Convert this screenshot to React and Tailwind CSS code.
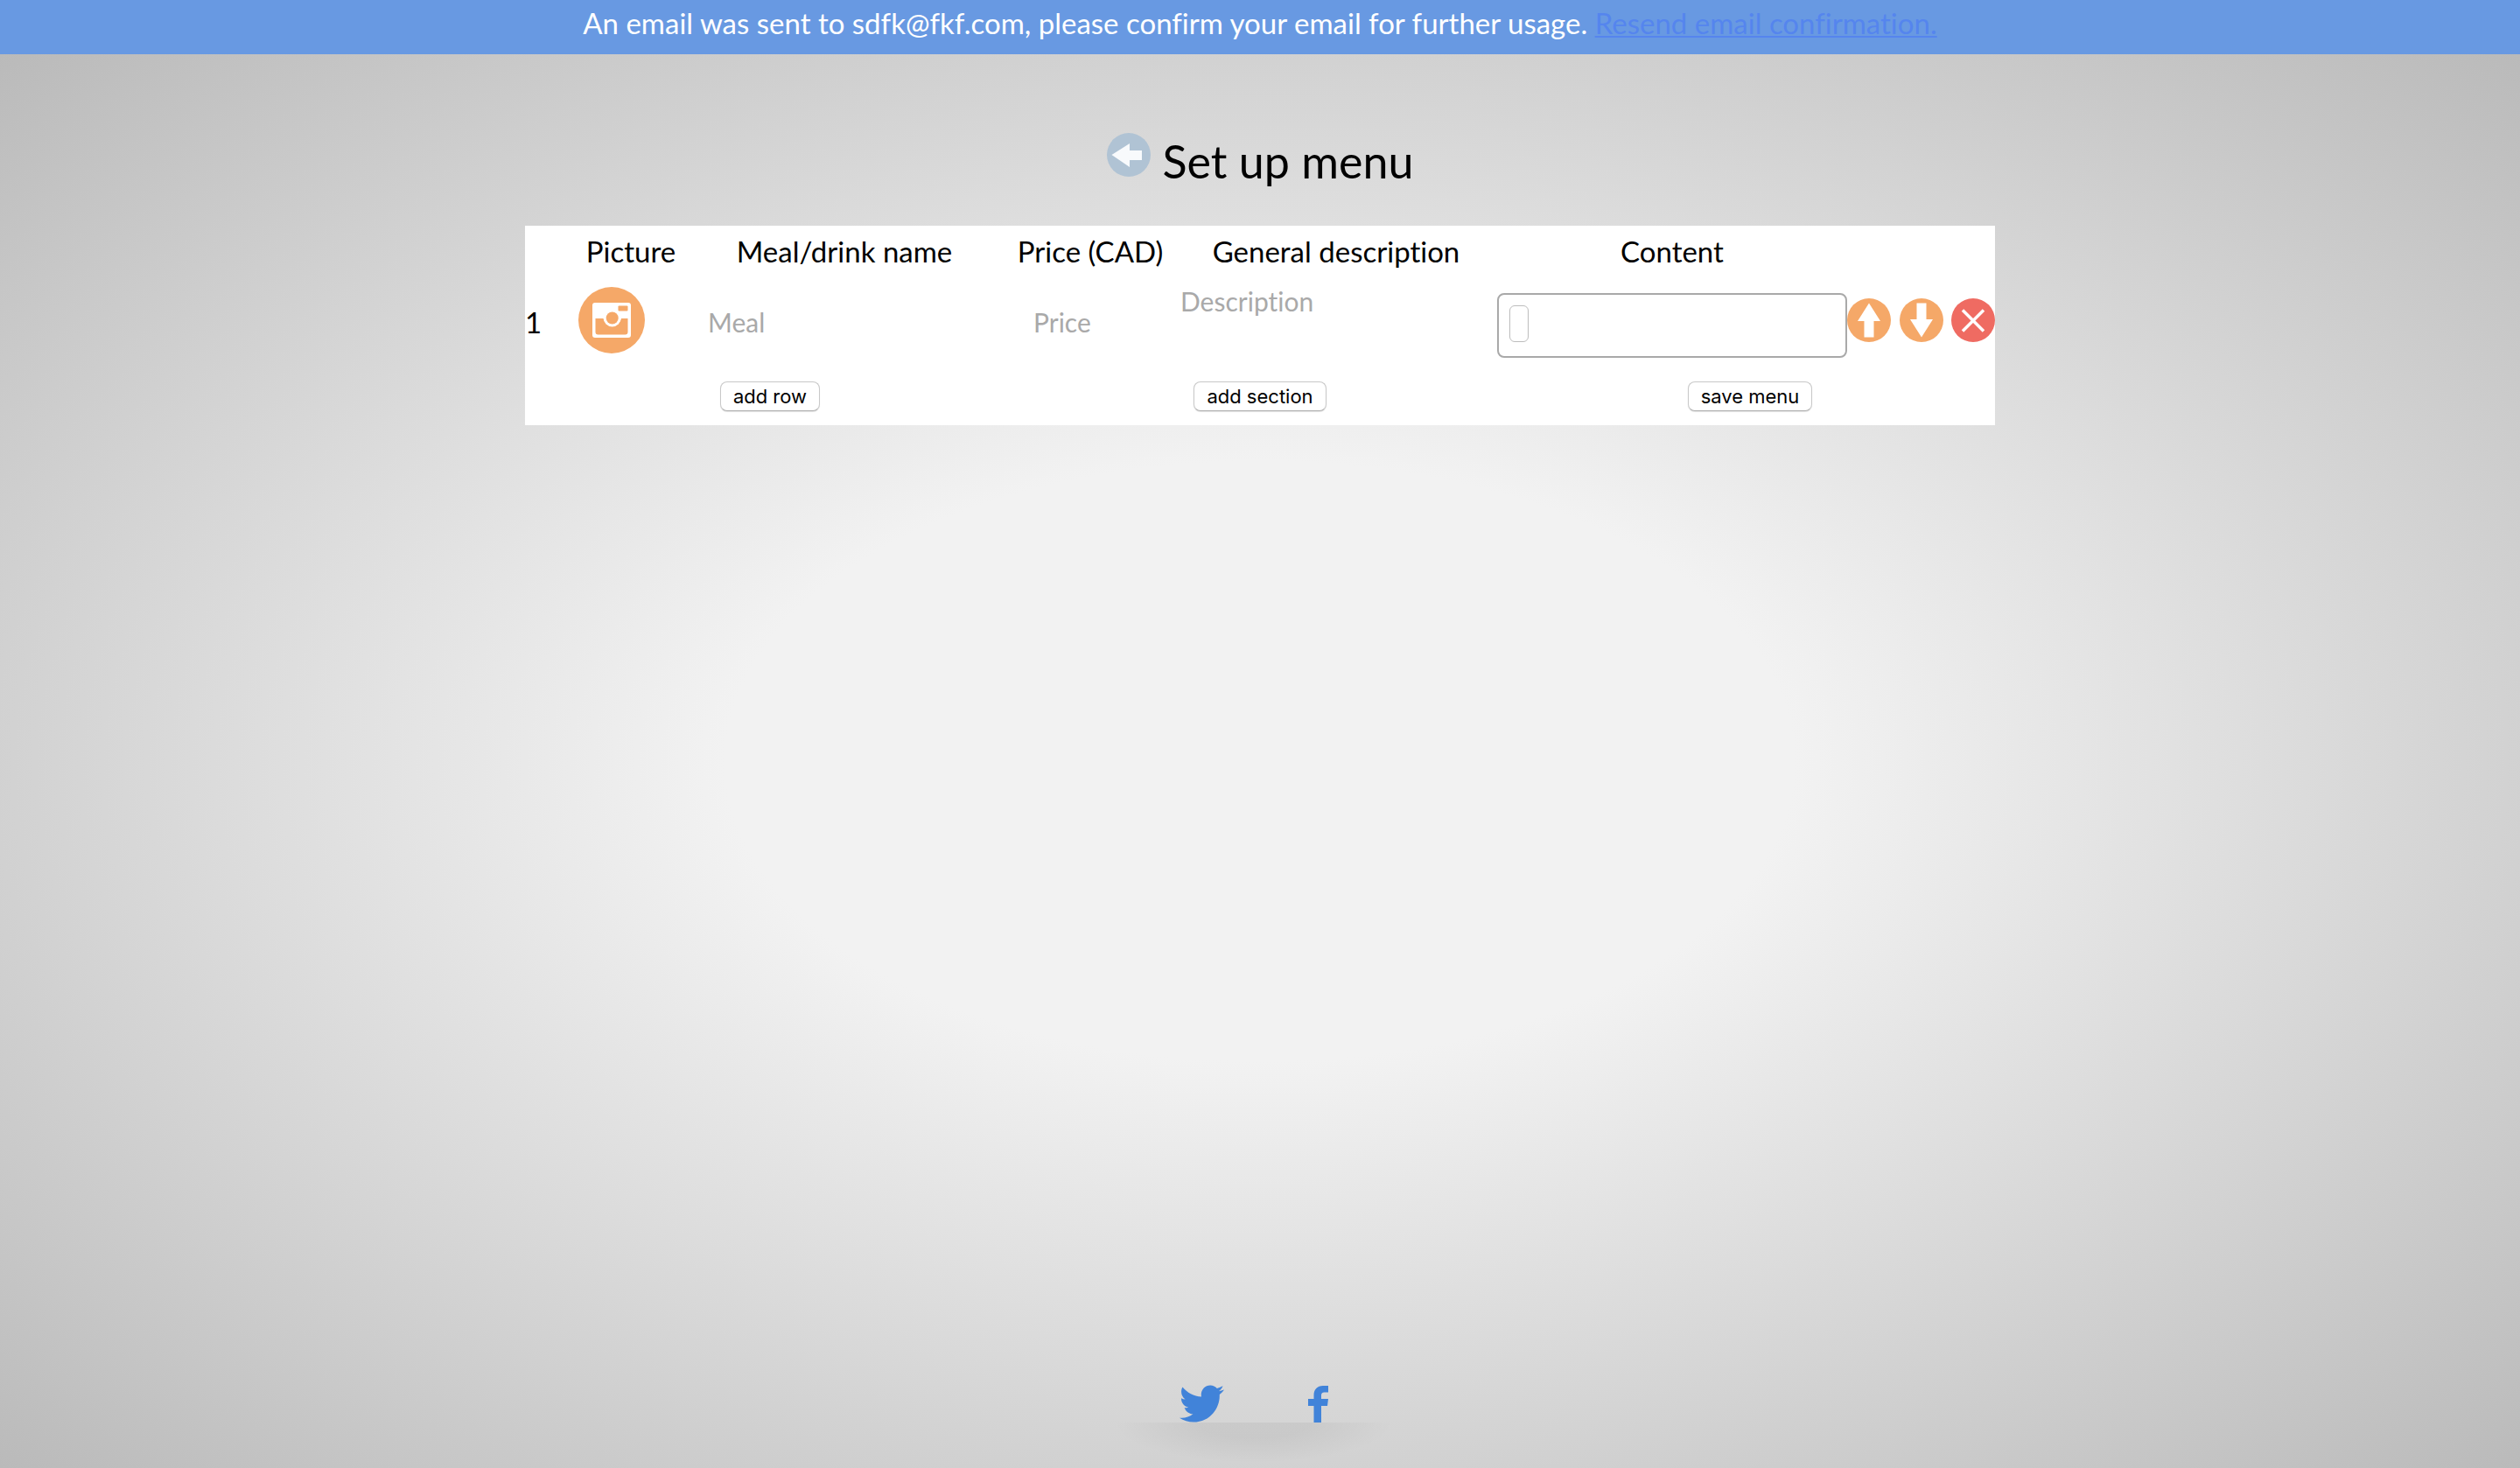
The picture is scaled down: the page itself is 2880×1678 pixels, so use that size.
const label = "text-[33px] leading-10 font-normal text-black";
const field =
  "w-full bg-transparent text-[30px] leading-10 text-black placeholder:text-[#a9a9a9] outline-none";
const pushButton =
  "h-[34px] rounded-lg border border-[#c8c8c8] border-b-[#b0b0b0] bg-white px-3.5 font-['Inter',sans-serif] text-[22px] leading-8 text-black shadow-[0_1px_1px_rgba(0,0,0,0.12)]";

function BackIcon() {
  return (
    <svg viewBox="0 0 50 50" className="size-[50px]" aria-hidden="true">
      <circle cx="25" cy="25" r="25" fill="#b0c3d4" />
      <path d="M5.5 25 26 12v8h14v11H26v8Z" fill="#f8fafc" />
    </svg>
  );
}

function CameraIcon() {
  return (
    <svg viewBox="0 0 76 76" className="size-[76px]" aria-hidden="true">
      <circle cx="38" cy="38" r="38" fill="#f5a868" />
      <rect x="16" y="18" width="44" height="40" rx="3" fill="#fff" />
      <rect x="45.5" y="21.5" width="11" height="6" rx="1" fill="#f5a868" />
      <path d="M19.5 36h9a10.5 10.5 0 0 0 20.500 0h7.500v15.500a3 3 0 0 1-3 3h-31a3 3 0 0 1-3-3Z" fill="#f5a868" />
      <circle cx="38.700" cy="35.500" r="10" fill="#fff" />
      <circle cx="38.700" cy="35.500" r="7" fill="#f5a868" />
    </svg>
  );
}

function UpIcon() {
  return (
    <svg viewBox="0 0 50 50" className="size-[50px]" aria-hidden="true">
      <circle cx="25" cy="25" r="25" fill="#f5a868" />
      <path d="M25 5.500 38 26h-7.500v18.500h-11V26H12Z" fill="#fff" />
    </svg>
  );
}

function DownIcon() {
  return (
    <svg viewBox="0 0 50 50" className="size-[50px]" aria-hidden="true">
      <circle cx="25" cy="25" r="25" fill="#f5a868" />
      <path d="M25 44.500 12 24h7.500V5.500h11V24H38Z" fill="#fff" />
    </svg>
  );
}

function RemoveIcon() {
  return (
    <svg viewBox="0 0 50 50" className="size-[50px]" aria-hidden="true">
      <circle cx="25" cy="25" r="25" fill="#ef6b62" />
      <path d="M13 13.500 37 37.500M37 13.500 13 37.500" stroke="#fff" strokeWidth="3.500" />
    </svg>
  );
}

function TwitterIcon() {
  return (
    <svg viewBox="0 2 24 20" className="h-[43px] w-[51px]" preserveAspectRatio="none" aria-hidden="true">
      <path
        fill="#4183d9"
        d="M23.954 4.569c-.885.389-1.830.654-2.825.775 1.014-.611 1.794-1.574 2.163-2.723-.951.555-2.005.959-3.127 1.184-.896-.959-2.173-1.559-3.591-1.559-2.717 0-4.920 2.203-4.920 4.917 0 .390.045.765.127 1.124C7.691 8.094 4.066 6.130 1.640 3.161c-.427.722-.666 1.561-.666 2.475 0 1.710.870 3.213 2.188 4.096-.807-.026-1.566-.248-2.228-.616v.061c0 2.385 1.693 4.374 3.946 4.827-.413.111-.849.171-1.296.171-.314 0-.615-.030-.916-.086.631 1.953 2.445 3.377 4.604 3.417-1.680 1.319-3.809 2.105-6.102 2.105-.390 0-.779-.023-1.170-.067 2.189 1.394 4.768 2.209 7.557 2.209 9.054 0 13.999-7.496 13.999-13.986 0-.209 0-.420-.015-.630.961-.689 1.800-1.560 2.460-2.548z"
      />
    </svg>
  );
}

function FacebookIcon() {
  return (
    <svg viewBox="0 0 23 42" className="h-[42px] w-[23px]" aria-hidden="true">
      <path
        fill="#4183d9"
        d="M6.500 42V23H0v-8h6.500v-4C6.500 4 10.500 0 17 0h6v7.500h-4.500c-2.500 0-3.500 1.200-3.500 3.500v4h8l-1 8h-7v19Z"
      />
    </svg>
  );
}

export default function App() {
  return (
    <div className="flex min-h-screen flex-col font-['Lato',sans-serif] text-black [font-variant-ligatures:none]">
      <header className="h-[62px] bg-[#6899e2] pt-1.5 text-center text-[33px] leading-10 text-white">
        An email was sent to sdfk@fkf.com, please confirm your email for further usage.{" "}
        <a href="#resend" className="text-[#5585ee] underline decoration-2 underline-offset-2">
          Resend email confirmation.
        </a>
      </header>

      <div className="flex flex-1 flex-col bg-[radial-gradient(ellipse_farthest-corner_at_center,#f2f2f2_30%,#bababa_100%)]">
        <main className="flex flex-col items-center pt-[90px]">
          <div className="flex items-start gap-3.5">
            <button type="button" aria-label="Back">
              <BackIcon />
            </button>
            <h1 className="text-[52px] leading-[64px]">Set up menu</h1>
          </div>

          <form className="mt-[42px] w-7/12 bg-white pb-4">
            <table className="w-full table-fixed">
              <colgroup>
                <col className="w-[61px]" />
                <col className="w-[120px]" />
                <col />
                <col className="w-[194px]" />
                <col />
                <col className="w-[400px]" />
                <col className="w-[169px]" />
              </colgroup>
              <thead>
                <tr className="h-[58px]">
                  <td />
                  <th className={label}>Picture</th>
                  <th className={label}>Meal/drink name</th>
                  <th className={label}>Price (CAD)</th>
                  <th className={label}>General description</th>
                  <th className={label}>Content</th>
                  <td />
                </tr>
              </thead>
              <tbody>
                <tr className="h-[100px]">
                  <td className="pt-1 text-[33px] leading-10">1</td>
                  <td>
                    <button type="button" aria-label="Add picture" className="block">
                      <CameraIcon />
                    </button>
                  </td>
                  <td className="px-7 pt-1">
                    <input type="text" aria-label="Meal" placeholder="Meal" className={field} />
                  </td>
                  <td className="pt-1 pl-8">
                    <input type="text" aria-label="Price" placeholder="Price" className={field} />
                  </td>
                  <td className="px-1.5 align-top">
                    <textarea
                      aria-label="Description"
                      placeholder="Description"
                      rows={2}
                      className={`${field} block resize-none pt-2`}
                    />
                  </td>
                  <td className="pt-3">
                    <div className="h-[74px] rounded-lg border-2 border-[#a9a9a9] p-3">
                      <input
                        type="text"
                        aria-label="Content"
                        className="block h-[42px] w-[22px] rounded-md border border-[#bdbdbd] bg-white outline-none"
                      />
                    </div>
                  </td>
                  <td>
                    <div className="flex justify-between">
                      <button type="button" aria-label="Move up">
                        <UpIcon />
                      </button>
                      <button type="button" aria-label="Move down">
                        <DownIcon />
                      </button>
                      <button type="button" aria-label="Remove row">
                        <RemoveIcon />
                      </button>
                    </div>
                  </td>
                </tr>
              </tbody>
            </table>
            <div className="grid grid-cols-3 justify-items-center pt-5">
              <button type="button" className={pushButton}>add row</button>
              <button type="button" className={pushButton}>add section</button>
              <button type="button" className={pushButton}>save menu</button>
            </div>
          </form>
        </main>

        <footer className="mt-auto flex flex-col items-center">
          <div className="flex items-end gap-24 pr-3.5">
            <a href="#twitter" aria-label="Twitter">
              <TwitterIcon />
            </a>
            <a href="#facebook" aria-label="Facebook">
              <FacebookIcon />
            </a>
          </div>
          <div className="mr-3.5 h-[52px] w-[320px] bg-[radial-gradient(ellipse_160px_46px_at_top,rgba(0,0,0,0.05)_40%,transparent_100%)]" />
        </footer>
      </div>
    </div>
  );
}
